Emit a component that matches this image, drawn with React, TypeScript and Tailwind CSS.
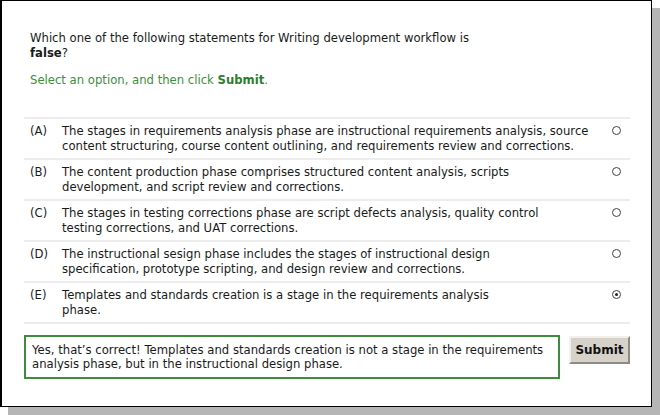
import React from "react";

type Option = {
  letter: string;
  lines: string[];
  checked?: boolean;
};

const options: Option[] = [
  {
    letter: "(A)",
    lines: [
      "The stages in requirements analysis phase are instructional requirements analysis, source",
      "content structuring, course content outlining,  and requirements review and corrections.",
    ],
  },
  {
    letter: "(B)",
    lines: [
      "The content production phase comprises structured content analysis, scripts",
      "development, and script review and corrections.",
    ],
  },
  {
    letter: "(C)",
    lines: [
      "The stages in testing corrections phase are script defects analysis, quality control",
      "testing corrections, and UAT corrections.",
    ],
  },
  {
    letter: "(D)",
    lines: [
      "The instructional sesign phase includes the stages of instructional design",
      "specification, prototype scripting, and design review and corrections.",
    ],
  },
  {
    letter: "(E)",
    lines: [
      "Templates and standards creation is a stage in the requirements analysis",
      "phase.",
    ],
    checked: true,
  },
];

const Radio = ({ checked }: { checked?: boolean }) => (
  <span className="mt-[2px] flex h-[9px] w-[9px] items-center justify-center rounded-full border border-[#444] bg-white">
    {checked && <span className="h-[3px] w-[3px] rounded-full bg-[#222]" />}
  </span>
);

const App = () => {
  return (
    <div
      className="h-[415px] w-[660px] bg-white"
      style={{ fontFamily: '"DejaVu Sans", Verdana, sans-serif' }}
    >
      <div className="h-[407px] w-[652px] border border-l-2 border-black bg-white text-[11.65px] leading-[15px] text-[#1a1a1a] shadow-[8px_8px_0_#b5b5b5]">
        <div className="flex flex-col pl-[22px] pr-[21px] pt-[30px]">
          <div className="pl-[6px]">
            <p>
              Which one of the following statements for Writing development workflow is
              <br />
              <b>false</b>?
            </p>
            <p className="mt-[12px] text-[#3a8f3a]">
              Select an option, and then click <b className="text-[#2e7d2e]">Submit</b>.
            </p>
          </div>

          <div className="mt-[29px] border-t-2 border-[#ededed]">
            {options.map((opt) => (
              <div
                key={opt.letter}
                className="flex h-[41px] items-start border-b-2 border-[#ededed] pl-[6px] pr-[9px] pt-[5px]"
              >
                <span className="w-[32px] shrink-0">{opt.letter}</span>
                <span className="flex-1 whitespace-nowrap">
                  {opt.lines.map((l, i) => (
                    <React.Fragment key={i}>
                      {l}
                      {i < opt.lines.length - 1 && <br />}
                    </React.Fragment>
                  ))}
                </span>
                <Radio checked={opt.checked} />
              </div>
            ))}
          </div>

          <div className="mt-[11px] flex items-start">
            <div className="h-[44px] w-[536px] border-2 border-[#3d8b3d] px-[6px] pt-[6px] leading-[14px] whitespace-nowrap">
              Yes, that’s correct! Templates and standards creation is not a stage in the requirements
              <br />
              analysis phase, but in the instructional design phase.
            </div>
            <button className="ml-[9px] mt-[1px] h-[28px] w-[61px] border-2 border-t-[#f2f0ec] border-l-[#f2f0ec] border-r-[#8e8b84] border-b-[#8e8b84] bg-[#d6d2ca] text-[12px] font-bold text-[#111]">
              Submit
            </button>
          </div>
        </div>
      </div>
    </div>
  );
};

export default App;
